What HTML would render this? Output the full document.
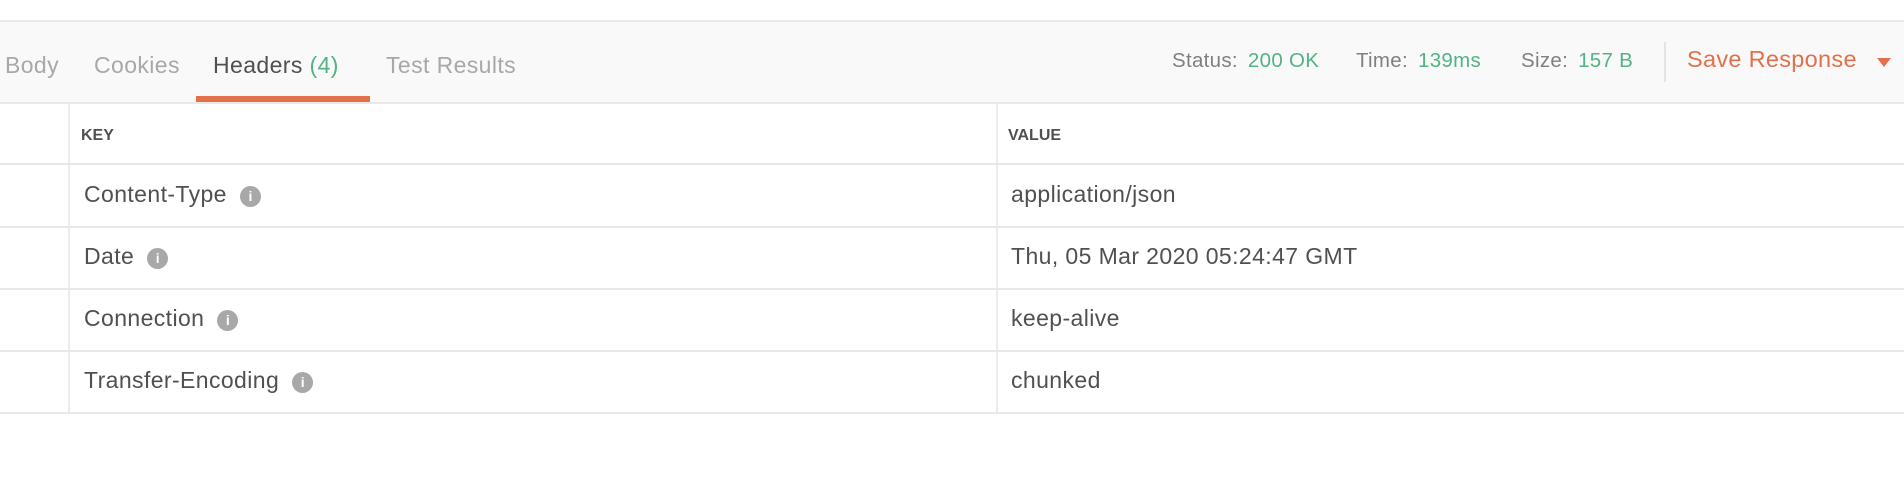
<!DOCTYPE html>
<html><head><meta charset="utf-8"><style>
*{margin:0;padding:0;box-sizing:border-box}
body{width:1904px;height:482px;background:#fff;font-family:"Liberation Sans",sans-serif;position:relative;overflow:hidden}
.a{position:absolute;white-space:nowrap}
.hl{position:absolute;left:0;width:1904px;height:2px;background:#e8e8e8}
.vl{position:absolute;width:2px;background:#ececec}
.tab{font-size:23px;color:#a8a8a8;top:52px;letter-spacing:0.4px}
.st{font-size:20.5px;color:#808080;top:49px;letter-spacing:0.3px}
.g{color:#52b483}
.k{font-size:23px;color:#505050;letter-spacing:0.4px}
.i{display:inline-block;width:21px;height:21px;border-radius:50%;background:#a8a8a8;color:#fff;font-size:14px;font-weight:bold;text-align:center;line-height:21px;vertical-align:1px;margin-left:13px;letter-spacing:0}
.h{font-size:16px;font-weight:bold;color:#505050;top:127px}
</style></head><body>
<div class="a" style="left:0;top:22px;width:1904px;height:80px;background:#f9f9f9"></div>
<div class="hl" style="top:20px"></div>
<div class="hl" style="top:102px"></div>
<div class="a tab" style="left:5px">Body</div>
<div class="a tab" style="left:94px">Cookies</div>
<div class="a tab" style="left:213px;color:#505050">Headers <span class="g">(4)</span></div>
<div class="a tab" style="left:386px">Test Results</div>
<div class="a" style="left:196px;top:96px;width:174px;height:6px;background:#e2704b"></div>
<div class="a st" style="left:1172px">Status: <span class="g" style="margin-left:4px">200 OK</span></div>
<div class="a st" style="left:1356px">Time: <span class="g" style="margin-left:4px">139ms</span></div>
<div class="a st" style="left:1521px">Size: <span class="g" style="margin-left:4px">157 B</span></div>
<div class="a" style="left:1664px;top:42px;width:2px;height:40px;background:#e4e4e4"></div>
<div class="a" style="left:1687px;top:46px;font-size:23.5px;color:#e2704b;letter-spacing:0.3px">Save Response</div>
<div class="a" style="left:1877px;top:58px;width:0;height:0;border-left:7px solid transparent;border-right:7px solid transparent;border-top:9px solid #e2704b"></div>
<div class="vl" style="left:68px;top:104px;height:310px"></div>
<div class="vl" style="left:996px;top:104px;height:310px"></div>
<div class="a h" style="left:81px">KEY</div>
<div class="a h" style="left:1008px">VALUE</div>
<div class="hl" style="top:163px"></div>
<div class="hl" style="top:226px"></div>
<div class="hl" style="top:288px"></div>
<div class="hl" style="top:350px"></div>
<div class="hl" style="top:412px"></div>
<div class="a k" style="left:84px;top:181px">Content-Type<span class="i">i</span></div>
<div class="a k" style="left:1011px;top:181px">application/json</div>
<div class="a k" style="left:84px;top:243px">Date<span class="i">i</span></div>
<div class="a k" style="left:1011px;top:243px">Thu, 05 Mar 2020 05:24:47 GMT</div>
<div class="a k" style="left:84px;top:305px">Connection<span class="i">i</span></div>
<div class="a k" style="left:1011px;top:305px">keep-alive</div>
<div class="a k" style="left:84px;top:367px">Transfer-Encoding<span class="i">i</span></div>
<div class="a k" style="left:1011px;top:367px">chunked</div>
</body></html>
